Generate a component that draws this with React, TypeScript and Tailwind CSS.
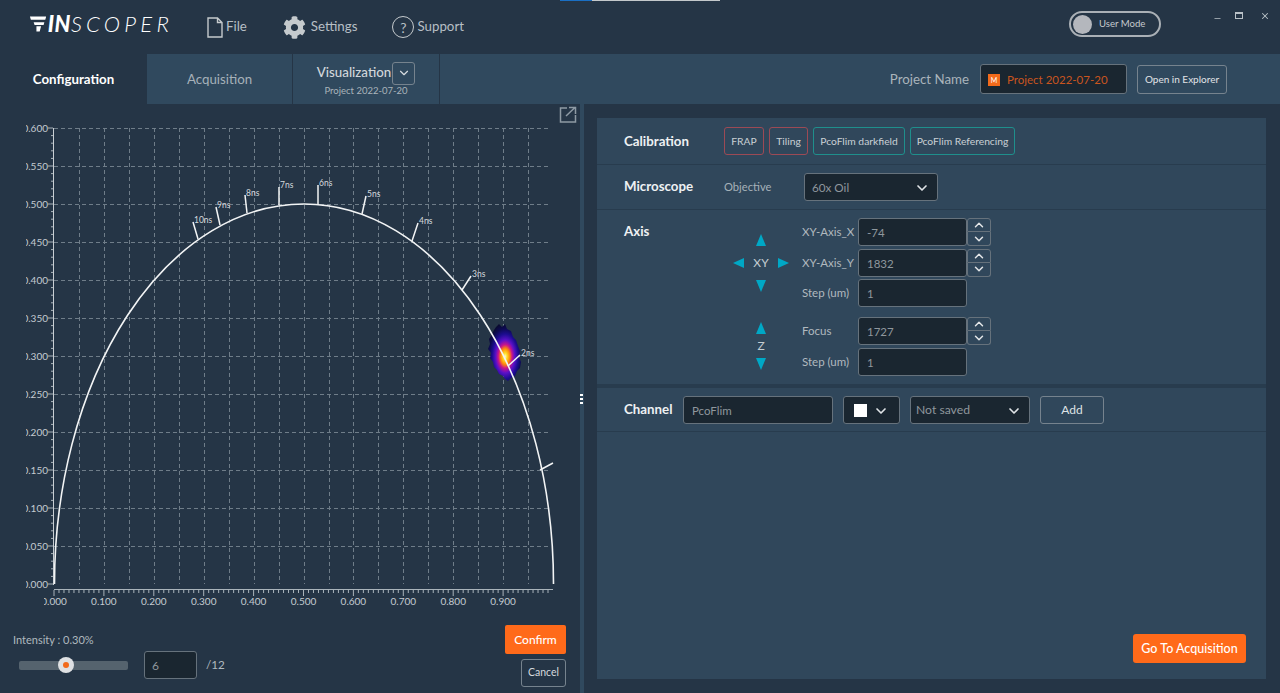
import { ChevronDown, ChevronUp, Minus, X } from "lucide-react";
import { FaCog } from "react-icons/fa";

const xLabels = ["0.000", "0.100", "0.200", "0.300", "0.400", "0.500", "0.600", "0.700", "0.800", "0.900"];
const yLabels = ["0.600", "0.550", "0.500", "0.450", "0.400", "0.350", "0.300", "0.250", "0.200", "0.150", "0.100", "0.050", "0.000"];

// [base x, base y, tip x, tip y, label]
const lifetimes: [number, number, number, number, string][] = [
  [198, 239, 193, 222, "10ns"],
  [220, 225, 216, 207, "9ns"],
  [247, 213, 245, 195, "8ns"],
  [279, 205, 279, 187, "7ns"],
  [318, 204, 318, 185, "6ns"],
  [362, 214, 366, 196, "5ns"],
  [412, 241, 418, 223, "4ns"],
  [462, 290, 471, 276, "3ns"],
  [508, 366, 520, 355, "2ns"],
];

function Phasor() {
  const gridX = Array.from({ length: 19 }, (_, i) => Math.round(79 + i * 24.95) + 0.5);
  const gridY = Array.from({ length: 12 }, (_, i) => 128.5 + i * 38);
  const ticksX = Array.from({ length: 100 }, (_, i) => 54 + i * 4.99);
  const ticksY = Array.from({ length: 61 }, (_, i) => 128 + i * 7.6);
  return (
    <svg width={580} height={512} viewBox="0 104 580 512" className="block shrink-0">
      <defs>
        <radialGradient id="blob" cx="0.52" cy="0.57" r="0.58">
          <stop offset="0" stopColor="#fffbc0" />
          <stop offset="0.1" stopColor="#ffe02a" />
          <stop offset="0.24" stopColor="#ff8a0a" />
          <stop offset="0.36" stopColor="#c8148c" />
          <stop offset="0.5" stopColor="#5a10c8" />
          <stop offset="0.68" stopColor="#1c0c90" />
          <stop offset="0.85" stopColor="#0c0a50" />
          <stop offset="1" stopColor="#0a0a30" />
        </radialGradient>
        <clipPath id="labels">
          <rect x="26" y="104" width="540" height="512" />
        </clipPath>
        <clipPath id="xlabels">
          <rect x="44" y="590" width="500" height="24" />
        </clipPath>
      </defs>

      {gridX.map((x) => (
        <line key={x} x1={x} x2={x} y1={128} y2={584} stroke="#6f7d89" strokeDasharray="4 3" />
      ))}
      {gridY.map((y) => (
        <line key={y} x1={54} x2={551} y1={y} y2={y} stroke="#6f7d89" strokeDasharray="4 3" />
      ))}

      <line x1={53.5} x2={53.5} y1={128} y2={585} stroke="#c8ced3" />
      {ticksY.map((y, i) => (
        <line key={y} x1={i % 5 === 0 ? 48 : 51} x2={53} y1={y} y2={y} stroke="#a9b3ba" />
      ))}
      <line x1={54} x2={553} y1={589.5} y2={589.5} stroke="#a9b3ba" />
      {ticksX.map((x, i) => (
        <line key={x} x1={x} x2={x} y1={590} y2={i % 10 === 0 ? 596 : 593} stroke="#a9b3ba" />
      ))}

      <g clipPath="url(#labels)" fontSize={10} fill="#c4cbd1">
        {yLabels.map((t, i) => (
          <text key={t} x={48} y={131.5 + i * 38} textAnchor="end">{t}</text>
        ))}
      </g>
      <g clipPath="url(#xlabels)" fontSize={10} fill="#c4cbd1">
        {xLabels.map((t, i) => (
          <text key={t} x={54 + i * 49.9} y={605} textAnchor="middle">{t}</text>
        ))}
      </g>

      <path
        d="M499 324l3 3 3-3 2 5 4 2 2 6 3 3 2 6 2 5-1 6 2 5-1 6-3 3-2 5-4 2-3 3-3-2-2-3-4-2-2-4-3-3-1-5-3-4 1-5-3-4 2-5-1-5 2-3 3-6 2-3z"
        fill="url(#blob)"
      />

      <path d="M54.500 584 A249.500 380 0 0 1 553.500 584" fill="none" stroke="#f2f4f5" strokeWidth={1.6} />
      {lifetimes.map(([x1, y1, x2, y2, t]) => (
        <g key={t}>
          <line x1={x1} y1={y1} x2={x2} y2={y2} stroke="#f2f4f5" strokeWidth={1.5} />
          <text x={x2 + 1} y={y2 + 1} fontSize={8.5} fill="#d5dade">{t}</text>
        </g>
      ))}
      <line x1={540} y1={470} x2={553} y2={463} stroke="#f2f4f5" strokeWidth={1.5} />

      {/* expand */}
      <g fill="none" stroke="#8e9aa4" strokeWidth={1.5}>
        <path d="M567 108h-6.500v14h15v-7" />
        <path d="M566 116l9-8.500M569 107.500h6.500v6.500" />
      </g>
    </svg>
  );
}

function Darkbox({ className, children }: { className: string; children?: React.ReactNode }) {
  return (
    <div className={"flex items-center rounded-[3px] border border-[#66727c] bg-[#1a2630] pt-[2px] text-[#8f979d] " + className}>
      {children}
    </div>
  );
}

function Stepper() {
  return (
    <div className="flex flex-col text-[#e4e7e9]">
      <div className="flex h-[14px] w-[24px] items-center justify-center rounded-t-[3px] border border-[#66727c]">
        <ChevronUp size={14} strokeWidth={2.5} />
      </div>
      <div className="flex h-[14px] w-[24px] items-center justify-center rounded-b-[3px] border border-t-0 border-[#66727c]">
        <ChevronDown size={14} strokeWidth={2.5} />
      </div>
    </div>
  );
}

function AxisRow({ label, value, stepper }: { label: string; value: string; stepper?: boolean }) {
  return (
    <div className="flex h-[28px] items-center">
      <span className="w-[56px] whitespace-nowrap text-[11.500px] text-[#b0b9bf]">{label}</span>
      <Darkbox className="h-[28px] w-[109px] pl-[8px] text-[11.500px]">{value}</Darkbox>
      {stepper && <Stepper />}
    </div>
  );
}

function Arrow({ dir }: { dir: "up" | "down" | "left" | "right" }) {
  if (dir === "up") return <div className="h-0 w-0 border-x-[5px] border-b-[12px] border-x-transparent border-b-[#00a8c6]" />;
  if (dir === "down") return <div className="h-0 w-0 border-x-[5px] border-t-[12px] border-x-transparent border-t-[#00a8c6]" />;
  if (dir === "left") return <div className="h-0 w-0 border-y-[5px] border-r-[11px] border-y-transparent border-r-[#00a8c6]" />;
  return <div className="h-0 w-0 border-y-[5px] border-l-[11px] border-y-transparent border-l-[#00a8c6]" />;
}

function CalButton({ text, red, width }: { text: string; red?: boolean; width: string }) {
  return (
    <button className={"h-[28px] whitespace-nowrap rounded-[3px] border pt-[2px] text-[10.300px] text-[#c9d0d5] " + width + (red ? " border-[#9c4a55]" : " border-[#1f8f8c]")}>
      {text}
    </button>
  );
}

export default function App() {
  return (
    <div className="relative flex h-[693px] w-[1280px] flex-col overflow-hidden bg-[#253546] font-['Lato','Open_Sans',sans-serif]">
      <div className="absolute left-[560px] top-0 h-px w-[32px] bg-[#1a6fc4]" />
      <div className="absolute left-[592px] top-0 h-px w-[128px] bg-[#c4c8cb]" />

      {/* title bar */}
      <header className="flex h-[54px] shrink-0 items-center pl-[29px]">
        <div className="mb-[7px] flex w-[144px] items-center gap-[2px] text-white">
          <svg width={18} height={16} viewBox="0 0 18 16" fill="#fff">
            <path d="M1 0h17.500l-1 3.500H2zM5 6h11.500l-.8 3H6zM8 10.500h5l-1.500 5.500H8z" />
          </svg>
          <span className="whitespace-nowrap text-[22px] italic leading-none">
            <b className="font-black tracking-[0.5px]">IN</b>
            <span className="font-light tracking-[4.200px]">SCOPER</span>
          </span>
        </div>
        <div className="ml-[34px] flex items-center gap-[3px] text-[13.300px] text-[#b7bfc5]">
          <svg width={16} height={21} viewBox="0 0 16 21" fill="none" stroke="#c5cacd" strokeWidth={1.4}>
            <path d="M1 1h9.500L15 5.500V20H1zM10.500 1v4.500H15" />
          </svg>
          File
        </div>
        <div className="ml-[36px] flex items-center gap-[5px] text-[13.300px] text-[#b7bfc5]">
          <FaCog size={23} className="text-[#c5cacd]" />
          Settings
        </div>
        <div className="ml-[35px] flex items-center gap-[3px] text-[13.300px] text-[#b7bfc5]">
          <div className="flex h-[22px] w-[22px] items-center justify-center rounded-full border border-[#c5cacd] text-[14px]">?</div>
          Support
        </div>
        <div className="mb-[6px] ml-auto mr-[119px] flex h-[26px] w-[92px] items-center rounded-full border-2 border-[#aab0b6] pl-[2px] text-[9.600px] text-[#c5cacd]">
          <div className="mr-[7px] h-[19px] w-[19px] rounded-full bg-[#b4b7bd]" />
          User Mode
        </div>
        <div className="absolute right-[10px] top-[8px] flex items-center gap-[15px] text-[#b9c1c7]">
          <Minus size={9} strokeWidth={2} className="mt-[6px]" />
          <div className="-ml-[2px] mr-[2px] h-[7px] w-[8px] border border-t-2 border-[#b9c1c7]" />
          <X size={10} strokeWidth={2.5} />
        </div>
      </header>

      {/* tabs */}
      <nav className="flex h-[50px] shrink-0 items-stretch bg-[#30495e]">
        <div className="flex w-[147px] items-center justify-center bg-[#253546] pt-[2px] text-[13.300px] font-bold text-white">Configuration</div>
        <div className="flex w-[146px] items-center justify-center border-r border-[#253546] pt-[2px] text-[13.300px] text-[#a6b1b9]">Acquisition</div>
        <div className="flex w-[147px] flex-col items-center justify-center border-r border-[#253546]">
          <div className="flex items-center gap-[1px]">
            <span className="text-[13.300px] font-medium text-[#d2d7db]">Visualization</span>
            <div className="flex h-[23px] w-[23px] items-center justify-center rounded-[3px] border border-[#76838e] text-[#d9dde0]">
              <ChevronDown size={14} />
            </div>
          </div>
          <span className="text-[9.500px] leading-[12px] text-[#aab4bb]">Project 2022-07-20</span>
        </div>
        <div className="ml-auto flex items-center pr-[53px]">
          <span className="mr-[11px] pt-[2px] text-[13.300px] text-[#aab4bb]">Project Name</span>
          <Darkbox className="h-[30px] w-[147px] pl-[7px] text-[11.500px]">
            <div className="mr-[7px] flex h-[12px] w-[12px] items-center justify-center bg-[#f26a1b] text-[7px] text-white">M</div>
            <span className="text-[#c9551f]">Project 2022-07-20</span>
          </Darkbox>
          <button className="ml-[10px] h-[29px] w-[90px] rounded-[3px] border border-[#76838e] text-[10px] text-[#e0e4e7]">Open in Explorer</button>
        </div>
      </nav>

      <main className="flex min-h-0 flex-1">
        {/* left */}
        <section className="flex w-[580px] shrink-0 flex-col">
          <Phasor />
          <div className="flex flex-1 items-start justify-between pl-[13px] pr-[14px] pt-[9px]">
            <div className="pt-[8px]">
              <div className="text-[11px] leading-[13px] text-[#b0b9bf]">Intensity : 0.30%</div>
              <div className="mt-[5px] flex items-center pl-[6px]">
                <div className="relative h-[9px] w-[109px] rounded-[2px] bg-[#55636e]">
                  <div className="absolute left-[39px] top-[-3.500px] flex h-[16px] w-[16px] items-center justify-center rounded-full bg-[#dfe1e3]">
                    <div className="h-[6px] w-[6px] rounded-full bg-[#f26a1b]" />
                  </div>
                </div>
                <Darkbox className="ml-[16px] h-[28px] w-[53px] pl-[7px] text-[12px]">6</Darkbox>
                <span className="ml-[9px] text-[11.700px] text-[#b0b9bf]">/12</span>
              </div>
            </div>
            <div className="flex flex-col items-end gap-[5px]">
              <button className="h-[29px] w-[61px] rounded-[2px] bg-[#ff6a1a] text-[12px] font-medium text-white">Confirm</button>
              <button className="h-[28px] w-[45px] rounded-[3px] border border-[#76838e] text-[10.500px] text-[#d5dade]">Cancel</button>
            </div>
          </div>
        </section>

        {/* splitter */}
        <div className="flex w-[4px] shrink-0 flex-col items-start justify-center gap-[2px] bg-[#30495e]">
          <div className="h-[2px] w-[3px] bg-white" />
          <div className="h-[2px] w-[3px] bg-white" />
          <div className="h-[2px] w-[3px] bg-white" />
        </div>

        {/* right */}
        <section className="flex min-w-0 flex-1 pb-[14px] pl-[13px] pr-[14px] pt-[14px]">
          <div className="relative flex flex-1 flex-col bg-[#30475b]">
            <div className="flex h-[47px] items-center border-b border-[#283c4e] pl-[27px]">
              <span className="w-[100px] pt-[2px] text-[13.300px] font-bold text-[#eef1f3]">Calibration</span>
              <div className="flex gap-[5px]">
                <CalButton text="FRAP" red width="w-[40px]" />
                <CalButton text="Tiling" red width="w-[39px]" />
                <CalButton text="PcoFlim darkfield" width="w-[92px]" />
                <CalButton text="PcoFlim Referencing" width="w-[105px]" />
              </div>
            </div>
            <div className="flex h-[45px] items-center border-b border-[#283c4e] pl-[27px]">
              <span className="w-[100px] text-[13.300px] font-bold text-[#eef1f3]">Microscope</span>
              <span className="w-[80px] text-[11.200px] text-[#a6b1b9]">Objective</span>
              <Darkbox className="h-[28px] w-[134px] justify-between px-[7px] text-[11.700px]">
                60x Oil
                <ChevronDown size={16} strokeWidth={2.5} className="text-[#e0e4e7]" />
              </Darkbox>
            </div>
            <div className="flex h-[178px] border-b-[4px] border-[#283c4e] pl-[27px] pt-[8px]">
              <span className="w-[100px] text-[13.300px] font-bold leading-[26px] text-[#eef1f3]">Axis</span>
              <div className="mr-[4px] flex w-[74px] flex-col pt-[16px]">
                <div className="flex h-[58px] flex-col items-center justify-between text-[12px] text-[#c5cdd2]">
                  <Arrow dir="up" />
                  <div className="flex items-center gap-[9px]">
                    <Arrow dir="left" />
                    <span>XY</span>
                    <Arrow dir="right" />
                  </div>
                  <Arrow dir="down" />
                </div>
                <div className="mt-[30px] flex h-[48px] flex-col items-center justify-between text-[12px] text-[#c5cdd2]">
                  <Arrow dir="up" />
                  <span>Z</span>
                  <Arrow dir="down" />
                </div>
              </div>
              <div className="flex flex-col gap-[2.500px]">
                <AxisRow label="XY-Axis_X" value="-74" stepper />
                <AxisRow label="XY-Axis_Y" value="1832" stepper />
                <AxisRow label="Step (um)" value="1" />
                <div className="h-[5px]" />
                <AxisRow label="Focus" value="1727" stepper />
                <AxisRow label="Step (um)" value="1" />
              </div>
            </div>
            <div className="flex h-[44px] items-center border-b border-[#283c4e] pl-[27px]">
              <span className="w-[59px] text-[13.300px] font-bold text-[#eef1f3]">Channel</span>
              <Darkbox className="h-[28px] w-[150px] pl-[8px] text-[11.500px]">PcoFlim</Darkbox>
              <Darkbox className="ml-[10px] h-[28px] w-[57px] justify-between px-[10px]">
                <div className="h-[13px] w-[13px] bg-white" />
                <ChevronDown size={16} strokeWidth={2.5} className="text-[#e0e4e7]" />
              </Darkbox>
              <Darkbox className="ml-[10px] h-[28px] w-[120px] justify-between pl-[5px] pr-[7px] text-[12.200px]">
                Not saved
                <ChevronDown size={16} strokeWidth={2.5} className="text-[#e0e4e7]" />
              </Darkbox>
              <button className="ml-[10px] h-[28px] w-[64px] rounded-[3px] border border-[#76838e] text-[12px] text-[#dfe3e6]">Add</button>
            </div>
            <div className="flex flex-1 items-end justify-end pb-[16px] pr-[20px]">
              <button className="h-[29px] w-[113px] rounded-[3px] bg-[#ff6a1a] pt-[2px] text-[12.500px] font-medium text-white">Go To Acquisition</button>
            </div>
          </div>
        </section>
      </main>
    </div>
  );
}
